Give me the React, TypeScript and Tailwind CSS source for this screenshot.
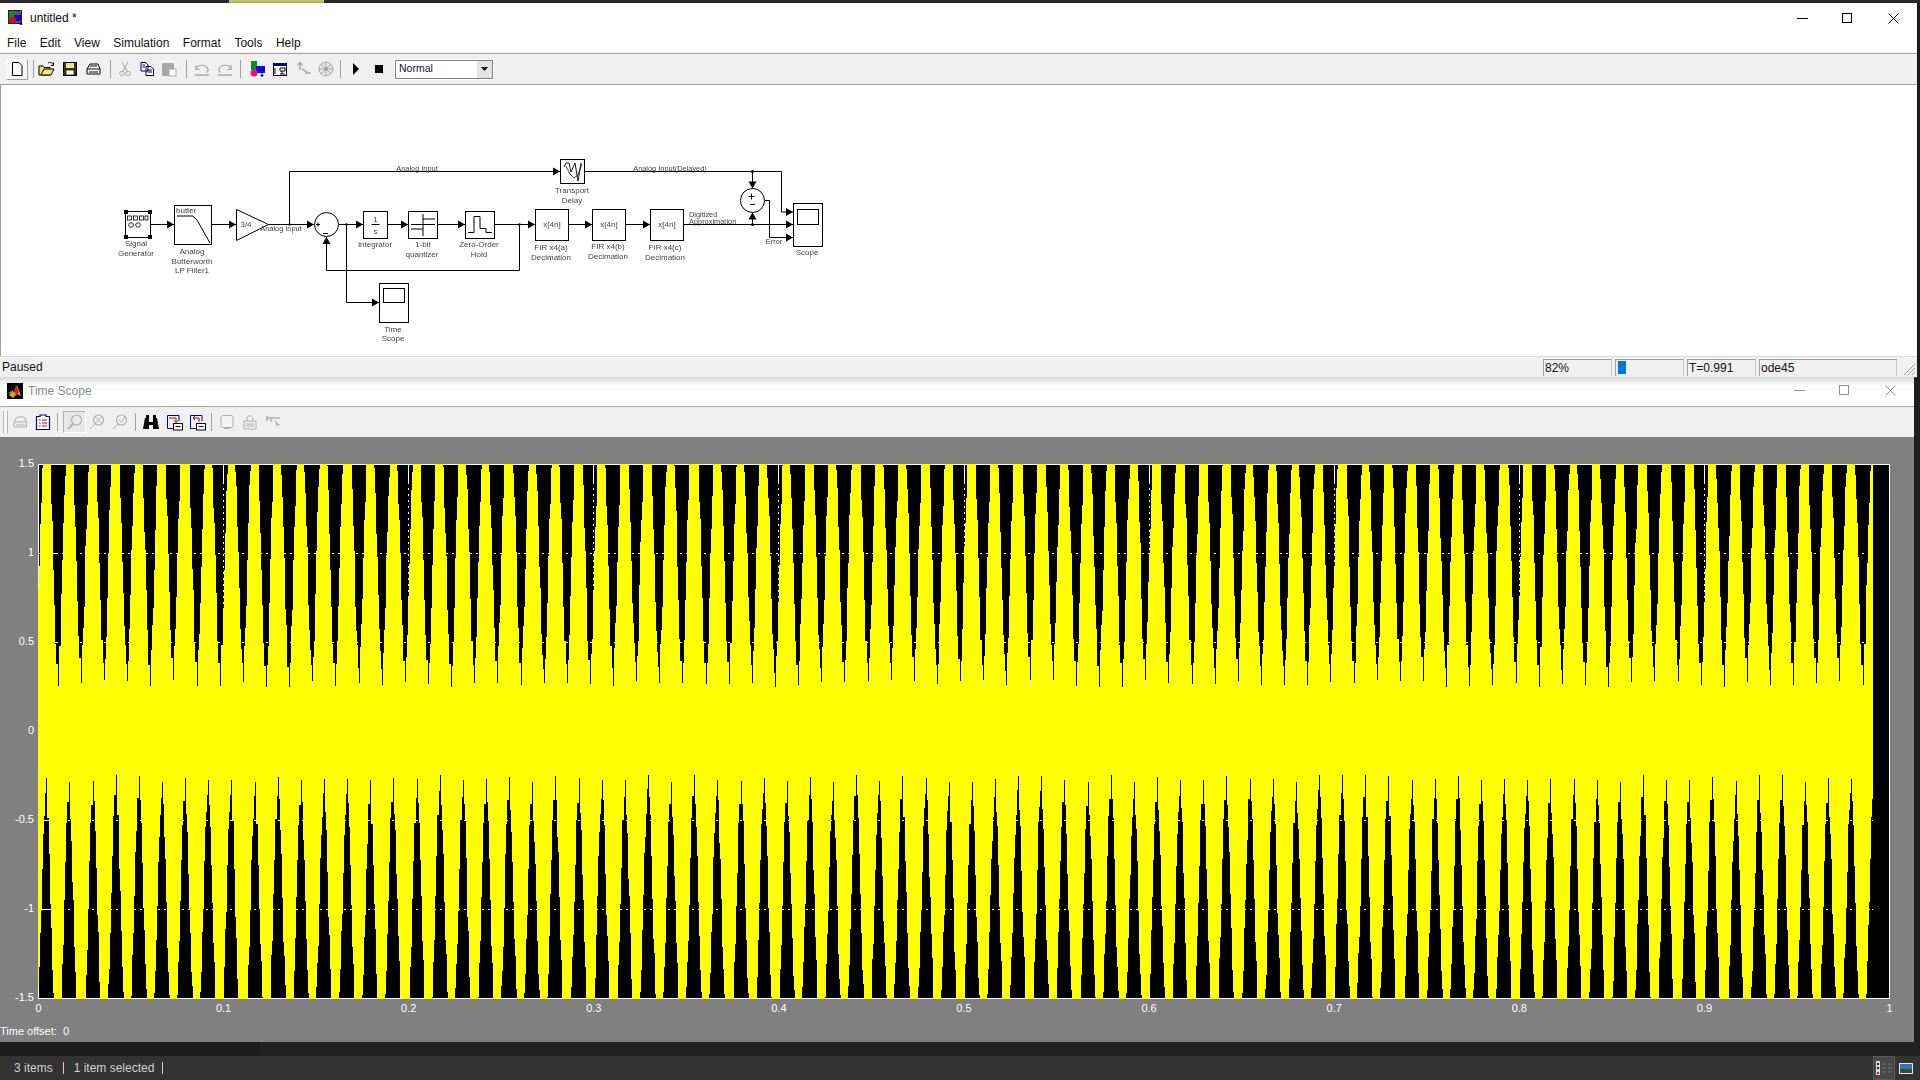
import React from "react";

const FONT = "font-['Liberation_Sans',Arial,sans-serif]";

function hash(n: number) {
  const x = Math.sin(n * 127.1 + 11.7) * 43758.5453;
  return x - Math.floor(x);
}

function widthAt(d: number) {
  // d: distance from the tip in px, profile measured from the plot
  const pts: [number, number][] = [[0, 1], [42, 5.3], [129, 9.7], [218, 15.7], [240, 17]];
  for (let i = 1; i < pts.length; i++) {
    if (d <= pts[i][0]) {
      const [a, wa] = pts[i - 1];
      const [b, wb] = pts[i];
      return wa + ((d - a) / (b - a)) * (wb - wa);
    }
  }
  return 17;
}

function edge(cx: number, tip: number, base: number, side: number, seed: number) {
  const dir = base > tip ? 1 : -1;
  const out: [number, number][] = [];
  let y = tip;
  let i = 0;
  let x = side < 0 ? cx : cx + 1;
  out.push([x, y]);
  while ((base - y) * dir > 0) {
    const step = 14 + Math.floor(hash(seed + i) * 12);
    const ny = (base - (y + dir * step)) * dir < 0 ? base : y + dir * step;
    out.push([x, ny]);
    const half = Math.round(widthAt(Math.abs(ny - tip)) / 2);
    x = side < 0 ? cx - half : cx + half;
    out.push([x, ny]);
    y = ny;
    i++;
  }
  return out;
}

function spike(cx: number, tip: number, base: number, seed: number) {
  const c = Math.round(cx);
  const l = edge(c, tip, base, -1, seed);
  const r = edge(c, tip, base, 1, seed + 57).reverse();
  return "M" + [...l, ...r].map((p) => `${p[0]} ${p[1]}`).join("L") + "Z";
}

const W = 1852;
const H = 535;

function wavePath() {
  let d = `M-40 -40H${W + 40}V${H + 40}H-40Z`;
  const period = 23.14;
  for (let k = -1; k < 81; k++) {
    const up = 19.7 + period * k;
    const dn = 8.3 + period * k;
    d += spike(up, 219 + Math.floor(hash(k + 300) * 8) - 3, -2, k * 13 + 1);
    d += spike(dn, 314 + Math.floor(hash(k + 600) * 8) - 3, H + 2, k * 17 + 900);
  }
  return d;
}

const xTicks = Array.from({ length: 11 }, (_, i) => i);
const yTicks = [0, 1, 2, 3, 4, 5, 6];
const xLabels = ["0", "0.1", "0.2", "0.3", "0.4", "0.5", "0.6", "0.7", "0.8", "0.9", "1"];
const yLabels = ["1.5", "1", "0.5", "0", "-0.5", "-1", "-1.5"];

function Plot() {
  const d = wavePath();
  return (
    <svg width={W} height={H} viewBox={`0 0 ${W} ${H}`} shapeRendering="crispEdges" className="block">
      <rect width={W} height={H} fill="#000" />
      {xTicks.map((i) => {
        const x = Math.round(i * 185.1) + 0.5;
        return (
          <g key={i} stroke="#fff" fill="none">
            <path d={`M${x} 0V${H}`} strokeDasharray="2 4" />
            <path d={`M${x} 0V18M${x} ${H - 18}V${H}`} />
          </g>
        );
      })}
      {yTicks.map((i) => {
        const y = i * 89 + 0.5;
        return (
          <g key={i} stroke="#fff" fill="none">
            <path d={`M0 ${y}H${W}`} strokeDasharray="2 4" />
            <path d={`M0 ${y}H18M${W - 18} ${y}H${W}`} />
          </g>
        );
      })}
      <rect x={0.5} y={0.5} width={W - 1} height={H - 1} fill="none" stroke="#fff" />
      <path d={d} fill="#ffff00" fillRule="evenodd" />
      <rect x={1835} y={1} width={16} height={H - 2} fill="#000" />
      <path d={`M1851.5 0V${H}M1835 0.5H${W}M1835 ${H - 0.5}H${W}`} stroke="#fff" />
    </svg>
  );
}

function Arrow({ x, y, dir = "r" }: { x: number; y: number; dir?: "r" | "u" | "d" }) {
  const p =
    dir === "r"
      ? `${x - 7},${y - 4} ${x},${y} ${x - 7},${y + 4}`
      : dir === "d"
        ? `${x - 4},${y - 7} ${x},${y} ${x + 4},${y - 7}`
        : `${x - 4},${y + 7} ${x},${y} ${x + 4},${y + 7}`;
  return <polygon points={p} fill="#000" />;
}

function Lbl({ x, y, t, a = "middle", s = 8 }: { x: number; y: number; t: string; a?: "middle" | "start"; s?: number }) {
  return (
    <text x={x} y={y} textAnchor={a} fontSize={s} fill="#444" fontFamily="Liberation Sans, Arial, sans-serif">
      {t}
    </text>
  );
}

function Box({ x, y, w, h }: { x: number; y: number; w: number; h: number }) {
  return <rect x={x} y={y} width={w} height={h} fill="#fff" stroke="#000" strokeWidth="1" />;
}

function Diagram() {
  // coordinates are page coordinates; the canvas starts at x = 1, y = 85
  const wy = 224.5;
  return (
    <svg width={1916} height={271} viewBox="1 85 1916 271" className="block blur-[0.3px]">
      <g fill="none" stroke="#000" strokeWidth="1">
        <path d={`M151 ${wy}H174M211 ${wy}H236M268 ${wy}H314M289.5 ${wy}V171.5H560M584.5 171.5H781.5V212H793`} />
        <path d={`M339 ${wy}H363M388 ${wy}H408M438 ${wy}H465M495 ${wy}H535M519.5 ${wy}V270.5H326.5V237`} />
        <path d={`M346.5 ${wy}V302.5H379M569 ${wy}H592M626 ${wy}H650M684 ${wy}H793`} />
        <path d="M752.5 171.5V189M752.5 224.5V212M765 200.5H769.5V237.5H793" />
      </g>
      <Arrow x={174} y={wy} />
      <Arrow x={236} y={wy} />
      <Arrow x={314} y={wy} />
      <Arrow x={363} y={wy} />
      <Arrow x={408} y={wy} />
      <Arrow x={465} y={wy} />
      <Arrow x={535} y={wy} />
      <Arrow x={592} y={wy} />
      <Arrow x={650} y={wy} />
      <Arrow x={793} y={212} />
      <Arrow x={793} y={wy} />
      <Arrow x={793} y={237.5} />
      <Arrow x={560} y={171.5} />
      <Arrow x={379} y={302.5} />
      <Arrow x={326.5} y={237} dir="u" />
      <Arrow x={752.5} y={188.5} dir="d" />
      <Arrow x={752.5} y={212.5} dir="u" />
      <circle cx={752.5} cy={171.5} r={1.5} fill="#000" />
      <circle cx={752.5} cy={224.5} r={1.5} fill="#000" />
      <circle cx={289.5} cy={224.5} r={1.2} fill="#000" />
      <circle cx={346.5} cy={224.5} r={1.2} fill="#000" />
      <circle cx={519.5} cy={224.5} r={1.2} fill="#000" />

      {/* Signal Generator */}
      <Box x={125.5} y={211.5} w={25} h={26} />
      <g fill="#000">
        <rect x={124} y={210} width={4} height={4} />
        <rect x={148} y={210} width={4} height={4} />
        <rect x={124} y={235} width={4} height={4} />
        <rect x={148} y={235} width={4} height={4} />
      </g>
      <g fill="none" stroke="#000" strokeWidth="0.8">
        <rect x={127.5} y={216} width={4} height={4} />
        <rect x={133.5} y={216} width={4} height={4} />
        <rect x={139.5} y={216} width={4} height={4} />
        <rect x={145} y={216} width={3} height={4} />
        <circle cx={131} cy={225} r={2.3} />
        <circle cx={138} cy={225} r={2.3} />
      </g>
      <Lbl x={136} y={246} t="Signal" />
      <Lbl x={136} y={256} t="Generator" />

      {/* Filter */}
      <Box x={174.5} y={205.5} w={37} h={39} />
      <Lbl x={176} y={213} t="butter" a="start" />
      <path d="M177 216H193L197 220L210 243" fill="none" stroke="#000" />
      <Lbl x={192} y={254} t="Analog" />
      <Lbl x={192} y={264} t="Butterworth" />
      <Lbl x={192} y={273} t="LP Filter1" />

      {/* Gain */}
      <polygon points="236.5,209.5 236.5,240.5 268.5,224.5" fill="#fff" stroke="#000" />
      <Lbl x={246} y={227} t="3/4" />
      <Lbl x={281} y={231} t="Analog Input" s={7.4} />
      <Lbl x={417} y={171} t="Analog Input" s={7.4} />

      {/* Sum 1 */}
      <circle cx={326.5} cy={224.5} r={12} fill="#fff" stroke="#000" />
      <path d="M316 224.5h4M318 222.5v4M323 233.5h5" stroke="#000" fill="none" />

      {/* Integrator */}
      <Box x={363.5} y={211.5} w={24} h={27} />
      <path d="M371.5 224.5h8" stroke="#000" />
      <Lbl x={375.5} y={222} t="1" />
      <Lbl x={375.5} y={234} t="s" />
      <Lbl x={375} y={247} t="Integrator" />

      {/* Quantizer */}
      <Box x={408.5} y={211.5} w={29} h={27} />
      <path d="M423 214V236M423 219H435M411 229H423M411 224.5H435" stroke="#000" fill="none" />
      <Lbl x={423} y={247} t="1-bit" />
      <Lbl x={422} y={257} t="quantizer" />

      {/* ZOH */}
      <Box x={465.5} y={211.5} w={29} h={27} />
      <path d="M468 232.5H474V216.5H480V228.5H486V232.5H492" stroke="#000" fill="none" />
      <Lbl x={479} y={247} t="Zero-Order" />
      <Lbl x={479} y={257} t="Hold" />

      {/* FIR */}
      {[
        [535.5, "FIR x4(a)", 551, 250],
        [592.5, "FIR x4(b)", 608, 249],
        [650.5, "FIR x4(c)", 665, 250],
      ].map(([x, t, lx, ly]) => (
        <g key={t as string}>
          <Box x={x as number} y={209.5} w={33} h={31} />
          <Lbl x={(x as number) + 16.5} y={227} t="x[4n]" />
          <Lbl x={lx as number} y={ly as number} t={t as string} />
          <Lbl x={lx as number} y={(ly as number) + 10} t="Decimation" />
        </g>
      ))}

      {/* Transport delay */}
      <Box x={560.5} y={159.5} w={24} h={24} />
      <path d="M564 167L566 163L569 163L571 172L575 163L578 181L581 163" stroke="#000" fill="none" strokeWidth="0.9" />
      <path d="M566 166L570 174L574 178L578 175L582 164" stroke="#000" fill="none" strokeWidth="0.7" />
      <Lbl x={572} y={193} t="Transport" />
      <Lbl x={572} y={203} t="Delay" />
      <Lbl x={670} y={171} t="Analog Input(Delayed)" s={7.4} />

      {/* Sum 2 */}
      <circle cx={752.5} cy={200.5} r={12} fill="#fff" stroke="#000" />
      <path d="M748.5 196.5h6M751.5 193.5v6M750 204.5h5" stroke="#000" fill="none" />
      <Lbl x={689} y={217} t="Digitized" a="start" s={7.4} />
      <Lbl x={689} y={224} t="Approximation" a="start" s={7.4} />
      <Lbl x={774} y={244} t="Error" s={7.4} />

      {/* Scope */}
      <Box x={793.5} y={203.5} w={29} h={43} />
      <rect x={797.5} y={209.5} width={21} height={15} fill="#fff" stroke="#000" />
      <Lbl x={807} y={255} t="Scope" />

      {/* Time scope */}
      <Box x={379.5} y={283.5} w={29} h={39} />
      <rect x={383.5} y={288.5} width={21} height={14} fill="#fff" stroke="#000" />
      <Lbl x={393} y={332} t="Time" />
      <Lbl x={393} y={341} t="Scope" />
    </svg>
  );
}

type I = { children: React.ReactNode };
function Ico({ children }: I) {
  return (
    <svg width={18} height={18} viewBox="0 0 18 18" className="block shrink-0">
      {children}
    </svg>
  );
}

function SlLogo() {
  return (
    <svg width={16} height={16} viewBox="0 0 16 16" className="block shrink-0">
      <rect x={0.5} y={0.5} width={13} height={13} fill="#555" stroke="#222" />
      <polygon points="1,1 7,1 7,9 1,9" fill="#1a8a2a" />
      <rect x={6} y={5} width={8} height={6} fill="#0a0ae0" />
      <circle cx={5} cy={10} r={3.3} fill="#e00020" />
      <path d="M13 12v3M11.5 14h3" stroke="#000" />
    </svg>
  );
}

const Sep = ({ l, r }: { l: number; r: number }) => (
  <div className="h-[18px] w-px shrink-0 bg-[#a0a0a0]" style={{ marginLeft: l, marginRight: r }} />
);

function Toolbar1() {
  const g = "#a8a8a8";
  return (
    <div className="flex h-[30px] items-center bg-[#f0f0f0] pl-[6px]">
      <div className="flex h-[21px] w-[22px] items-center justify-center border-b border-r border-[#a0a0a0] bg-[#f6f6f6] border-l border-t border-l-white border-t-white">
        <Ico>
          <path d="M4.5 2.5H11L14 5.5V15.5H4.5Z" fill="#fff" stroke="#000" />
        </Ico>
      </div>
      <Sep l={5} r={4} />
      <div className="flex items-center gap-[5px]">
        <Ico>
          <path d="M1 6H5L6 7.500H12V15H1Z" fill="#e8e070" stroke="#000" />
          <path d="M3 15L6 9H16L13 15Z" fill="#f2ea70" stroke="#000" />
          <path d="M10 3C12 2 14 2 15.500 5M15.500 2.500V5.500H13" fill="none" stroke="#000" />
        </Ico>
        <Ico>
          <rect x={2.5} y={2.500} width={13} height={13} fill="#3a3a10" stroke="#000" />
          <rect x={5} y={3} width={8} height={5} fill="#e8e0a0" />
          <rect x={5} y={10} width={8} height={5} fill="#fff" stroke="#000" strokeWidth=".7" />
        </Ico>
        <Ico>
          <path d="M3 9L6 4H14L16 9V14H3Z" fill="#fff" stroke="#000" />
          <path d="M3 9H16M5 12H14M6 6H13" stroke="#000" fill="none" />
        </Ico>
      </div>
      <Sep l={8} r={5} />
      <div className="flex items-center gap-[4px]">
        <Ico>
          <path d="M6 2L11 11M12 2L7 11" stroke={g} fill="none" />
          <circle cx={6} cy={13.500} r={2.300} fill="none" stroke={g} />
          <circle cx={12} cy={13.500} r={2.300} fill="none" stroke={g} />
        </Ico>
        <Ico>
          <path d="M3 2.500H8L10 5V11H3ZM8 6.500H13L15.500 9V15.500H8Z" fill="#fff" stroke="#000050" />
          <path d="M9.500 10H14M9.500 12H14M4.500 5H7M4.500 7H7" stroke="#000050" />
        </Ico>
        <Ico>
          <rect x={2} y={3} width={12} height={13} rx={1.500} fill={g} />
          <rect x={9} y={9} width={7} height={7} fill="#fff" stroke={g} />
        </Ico>
      </div>
      <Sep l={8} r={6} />
      <div className="flex items-center gap-[5px]">
        <Ico>
          <path d="M3 5V9.500H7M3 9C5 4 13 4 15 9C15.500 11 14.500 12 13.500 12.500" fill="none" stroke={g} strokeWidth="1.200" />
          <path d="M2 15H16" stroke={g} strokeWidth="1.500" />
        </Ico>
        <Ico>
          <path d="M15 5V9.500H11M15 9C13 4 5 4 3 9C2.500 11 3.500 12 4.500 12.500" fill="none" stroke={g} strokeWidth="1.200" />
          <path d="M2 15H16" stroke={g} strokeWidth="1.500" />
        </Ico>
      </div>
      <Sep l={6} r={7} />
      <div className="flex items-center gap-[5px]">
        <Ico>
          <polygon points="3,1 9,1 9,10 3,10" fill="#128a28" />
          <rect x={8} y={6} width={9} height={7} fill="#0a0ae8" />
          <circle cx={6} cy={13} r={3.500} fill="#f01070" />
          <path d="M14 13v4M12.500 15.500h3" stroke="#000" />
        </Ico>
        <Ico>
          <rect x={2.500} y={3.500} width={13} height={12} fill="#fff" stroke="#000" />
          <rect x={2} y={3} width={14} height={3} fill="#000080" />
          <path d="M4 8v6M9 8h5v3h-5zM11 11v3M9 14h5" stroke="#000" fill="none" />
        </Ico>
        <Ico>
          <path d="M6 3v7M3.500 5L6 2.500L8.500 5" stroke={g} fill="none" strokeWidth="1.500" />
          <path d="M8 9l5 3M11 13h6" stroke={g} fill="none" strokeWidth="1.500" />
        </Ico>
        <Ico>
          <circle cx={9} cy={9} r={7} fill="#e8e8e8" stroke={g} />
          <path d="M9 2v14M2 9h14M4 4l10 10M14 4L4 14" stroke={g} />
          <circle cx={9} cy={9} r={2} fill={g} />
        </Ico>
      </div>
      <Sep l={5} r={11} />
      <div className="flex items-center gap-[15px]">
        <svg width={8} height={12} viewBox="0 0 8 12" className="block">
          <polygon points="1,0 7,6 1,12" fill="#000" />
        </svg>
        <div className="h-[8px] w-[8px] bg-black" />
      </div>
      <div className="ml-[12px] flex h-[19px] w-[98px] items-center border border-[#808080] bg-white text-[10.5px] text-[#10104a] outline outline-1 outline-white">
        <span className="flex-1 pl-[3px]">Normal</span>
        <div className="flex h-[17px] w-[16px] items-center justify-center border-l border-white bg-[#e4e4e4]">
          <svg width={7} height={4} viewBox="0 0 7 4" className="block">
            <polygon points="0,0 7,0 3.500,4" fill="#000" />
          </svg>
        </div>
      </div>
    </div>
  );
}

function Toolbar2() {
  const g = "#b0b0b0";
  return (
    <div className="flex h-[30px] items-center bg-[#f0f0f0] pl-[3px]">
      <div className="mr-[3px] h-[22px] w-[5px] border-x border-[#b4b4b4] bg-[#f8f8f8]" />
      <div className="flex items-center gap-[5px]">
        <Ico>
          <path d="M3 9L6 4H13L15.500 9V14H3Z" fill="#eee" stroke={g} />
          <path d="M3 9H15.500M5 12H14" stroke={g} />
        </Ico>
        <Ico>
          <path d="M2.500 3.500H6V2H12V3.500H15.500V16.500H2.500Z" fill="#fff" stroke="#00008a" strokeWidth="1.200" />
          <path d="M5 7H6.500M8 7H13M5 10H6.500M8 10H13M5 13H6.500M8 13H13" stroke="#a01030" />
        </Ico>
      </div>
      <Sep l={5} r={5} />
      <div className="flex h-[22px] w-[23px] items-center justify-center border border-b-white border-r-white border-l-[#b0b0b0] border-t-[#b0b0b0] bg-[#e8e8e8]">
        <Ico>
          <circle cx={10.500} cy={7} r={5} fill="none" stroke={g} strokeWidth="1.200" />
          <path d="M7 11L2 16" stroke={g} strokeWidth="2" />
        </Ico>
      </div>
      <div className="ml-[2px] flex items-center gap-[5px]">
        <Ico>
          <circle cx={10.500} cy={7} r={5} fill="none" stroke={g} strokeWidth="1.200" />
          <path d="M7 3.500l7 7M14 3.500l-7 7M7 11L2 16" stroke={g} />
        </Ico>
        <Ico>
          <circle cx={10.500} cy={7} r={5} fill="none" stroke={g} strokeWidth="1.200" />
          <path d="M8 7l2.500 2.500L14 3.500M7 11L2 16" stroke={g} fill="none" />
        </Ico>
      </div>
      <Sep l={6} r={6} />
      <div className="flex items-center gap-[5px]">
        <Ico>
          <path d="M3 5H7V9H11V5H15L17 16H11V12H7V16H1Z" fill="#000" />
          <rect x={4} y={2} width={3} height={4} fill="#000" />
          <rect x={11} y={2} width={3} height={4} fill="#000" />
        </Ico>
        <Ico>
          <path d="M2.500 2.500H14V8M2.500 2.500V15.500H8" fill="none" stroke="#000090" />
          <path d="M4 5H11V9M9 7.500L11 9.500L13 7.500" fill="none" stroke="#901020" />
          <rect x={8.500} y={10.500} width={9} height={6.500} fill="#fff" stroke="#000" />
          <path d="M10.500 13.500h5" stroke="#000" />
        </Ico>
        <Ico>
          <path d="M2.500 2.500H14V8M2.500 2.500V15.500H8" fill="none" stroke="#000090" />
          <path d="M11 9V5H5M7 3L5 5L7 7" fill="none" stroke="#901020" />
          <rect x={8.500} y={10.500} width={9} height={6.500} fill="#fff" stroke="#000" />
          <path d="M10.500 13.500h5" stroke="#000" />
        </Ico>
      </div>
      <Sep l={5} r={6} />
      <div className="flex items-center gap-[5px]">
        <Ico>
          <rect x={3} y={2.500} width={12} height={12} rx={2} fill="#f4f4f4" stroke={g} />
          <path d="M6 15.500h6" stroke={g} />
        </Ico>
        <Ico>
          <path d="M6 8V5C6 2 12 2 12 5V8" fill="none" stroke={g} />
          <rect x={3} y={8} width={12} height={8} fill="#eee" stroke={g} />
          <path d="M5 11h8M5 13h8" stroke={g} />
        </Ico>
        <div className="ml-[1px]">
          <Ico>
            <path d="M1 5H15M6 5V9M2 3V8" stroke={g} fill="none" strokeWidth="1.500" />
            <path d="M9 7L15 12L12 12.500L13 16L9 7Z" fill={g} />
          </Ico>
        </div>
      </div>
    </div>
  );
}

function Pane({ w, children }: { w: number; children?: React.ReactNode }) {
  return (
    <div
      className="flex h-[17px] shrink-0 items-center border-l border-t border-[#a0a0a0] border-r-[#c8c8c8] border-r pl-[1px] text-[12px] text-[#111]"
      style={{ width: w }}
    >
      {children}
    </div>
  );
}

function WinControls({ color }: { color: string }) {
  return (
    <div className="flex items-center">
      <svg width={11} height={11} viewBox="0 0 11 11" className="block">
        <path d="M0 5.500H11" stroke={color} />
      </svg>
      <svg width={11} height={11} viewBox="0 0 11 11" className="ml-[34px] block">
        <rect x={0.500} y={0.500} width={9} height={9} fill="none" stroke={color} />
      </svg>
      <svg width={11} height={11} viewBox="0 0 11 11" className="ml-[35px] block">
        <path d="M0.500 0.500L10.500 10.500M10.500 0.500L0.500 10.500" stroke={color} />
      </svg>
    </div>
  );
}

export default function App() {
  return (
    <div className={`flex h-[1080px] w-[1920px] flex-col overflow-hidden bg-[#1e1e1e] ${FONT}`}>
      <div className="flex h-[3px] shrink-0 bg-[#2b2b2b]">
        <div className="ml-[229px] w-[95px] bg-[#c9c56c]" />
      </div>

      <div className="mr-[3px] flex h-[374px] shrink-0 flex-col bg-white shadow-[0_1px_3px_rgba(0,0,0,0.7)]">
        <div className="flex h-[32px] shrink-0 items-center justify-between pb-[2px] pl-[8px] pr-[18px]">
          <div className="flex items-center gap-[6px] text-[12px] text-[#111]">
            <SlLogo />
            <span>untitled *</span>
          </div>
          <WinControls color="#000" />
        </div>
        <div className="flex h-[17px] shrink-0 items-center gap-[13.5px] px-[7px] pb-[1px] text-[12px] text-[#111]">
          <span>File</span>
          <span>Edit</span>
          <span>View</span>
          <span>Simulation</span>
          <span>Format</span>
          <span>Tools</span>
          <span>Help</span>
        </div>
        <div className="h-px shrink-0 bg-[#f0f0f0]" />
        <div className="h-px shrink-0 bg-[#a0a0a0]" />
        <Toolbar1 />
        <div className="h-px shrink-0 bg-[#a0a0a0]" />
        <div className="flex-1 overflow-hidden border-l border-[#a0a0a0] bg-white">
          <Diagram />
        </div>
        <div className="flex h-[21px] shrink-0 items-center justify-between border-t border-[#dcdcdc] bg-[#f0f0f0] pl-[2px] pr-[1px] shadow-[0_1px_1px_#444]">
          <span className="text-[12px] text-[#111]">Paused</span>
          <div className="flex items-center gap-[3px]">
            <Pane w={69}>82%</Pane>
            <Pane w={69}>
              <div className="ml-[1px] h-[13px] w-[8px] bg-[#0078d7]" />
            </Pane>
            <Pane w={69}>T=0.991</Pane>
            <Pane w={138}>ode45</Pane>
            <svg width={16} height={17} viewBox="0 0 16 17" className="block">
              <path d="M4 16L15 5M8 16L15 9M12 16L15 13" stroke="#a0a0a0" fill="none" />
            </svg>
          </div>
        </div>
      </div>

      <div className="mr-[6px] flex h-[665px] shrink-0 flex-col bg-white">
        <div className="flex h-[29px] shrink-0 items-center justify-between bg-gradient-to-b from-[#d8d8d8] to-white to-[30%] pb-[2px] pl-[7px] pr-[18px]">
          <div className="flex items-center gap-[5px] text-[12px] text-[#8a8a8a]">
            <svg width={16} height={16} viewBox="0 0 16 16" className="block shrink-0">
              <rect width={16} height={16} fill="#000" />
              <path d="M2 11L8 8L10 2L13 10L14 13L10 11L6 15L3 13Z" fill="#e8a010" />
              <path d="M9 2L12 9L9 12L7 8Z" fill="#d02020" />
              <path d="M1 10L6 7L6 10Z" fill="#888" />
            </svg>
            <span>Time Scope</span>
          </div>
          <WinControls color="#909090" />
        </div>
        <div className="h-px shrink-0 bg-[#a8a8a8]" />
        <Toolbar2 />
        <div className="relative flex-1 bg-[#808080] text-[11px] text-white">
          <div className="absolute left-[38px] top-[27px]">
            <Plot />
          </div>
          {yLabels.map((l, i) => (
            <span key={l} className="absolute right-[1880px] leading-none" style={{ top: 21 + i * 89 }}>
              {l}
            </span>
          ))}
          {xLabels.map((l, i) => (
            <span key={l} className="absolute -translate-x-1/2 leading-none" style={{ left: 38.5 + i * 185.1, top: 566 }}>
              {l}
            </span>
          ))}
          <span className="absolute left-0 top-[589px] leading-none">Time offset:</span>
          <span className="absolute left-[63px] top-[589px] leading-none">0</span>
        </div>
      </div>

      <div className="flex h-[14px] shrink-0">
        <div className="w-[260px] bg-[#1c1c1c]" />
        <div className="flex-1 bg-[#222222]" />
      </div>

      <div className="flex flex-1 items-stretch justify-between bg-[#333333] pl-[14px] text-[12px] text-[#d0d0d0]">
        <div className="flex items-center">
          <span>3 items</span>
          <span className="ml-[10px] h-[12px] w-px bg-[#d0d0d0]" />
          <span className="ml-[10px]">1 item selected</span>
          <span className="ml-[8px] h-[12px] w-px bg-[#d0d0d0]" />
        </div>
        <div className="mr-[7px] flex items-center gap-[4px]">
          <div className="flex h-full w-[22px] items-center justify-center border border-[#5a5a5a] bg-[#484848]">
            <svg width={18} height={14} viewBox="0 0 18 14" className="block">
              <rect x={1} y={0} width={4} height={14} fill="#d8d8d8" />
              <rect x={2} y={2} width={2} height={2} fill="#222" />
              <rect x={2} y={6} width={2} height={2} fill="#222" />
              <rect x={2} y={11} width={2} height={2} fill="#c02020" />
              <path d="M7 3h4M13 3h4M7 7h4M13 7h4M7 11h4M13 11h4" stroke="#777" />
            </svg>
          </div>
          <svg width={14} height={11} viewBox="0 0 14 11" className="block">
            <rect width={14} height={11} fill="#e8e8e8" />
            <rect x={1} y={1} width={12} height={9} fill="#2a78b8" />
            <rect x={1} y={6} width={12} height={4} fill="#305030" />
          </svg>
        </div>
      </div>
    </div>
  );
}
